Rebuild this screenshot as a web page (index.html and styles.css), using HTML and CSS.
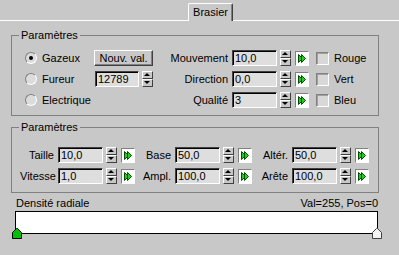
FILE: index.html
```html
<!DOCTYPE html>
<html lang="fr">

<head>
    <meta charset="UTF-8">
    <title>Brasier</title>
    <link rel="stylesheet" href="styles.css">
</head>

<body>
    <svg width="0" height="0" class="defs">
        <symbol id="key" viewBox="0 0 12 13">
            <polygon points="2.5,2.5 6.5,6.5 2.5,10.5" fill="#22cc22" stroke="#005000" />
            <polygon points="5.5,2.5 9.5,6.5 5.5,10.5" fill="#22cc22" stroke="#005000" />
        </symbol>
    </svg>

    <div class="tabbar">
        <div class="tab">Brasier</div>
    </div>

    <fieldset class="group">
        <legend>Paramètres</legend>
        <div class="rows rows-top">
            <div class="row">
                <span class="opt"><span class="radio on"></span>Gazeux</span>
                <span class="mid"><button class="btn">Nouv. val.</button></span>
                <span class="lbl w79">Mouvement</span>
                <span class="field">10,0</span>
                <span class="spin"><i></i><i></i></span>
                <span class="key"><svg width="12" height="13"><use href="#key" /></svg></span>
                <span class="check"></span><span class="clabel">Rouge</span>
            </div>
            <div class="row">
                <span class="opt"><span class="radio"></span>Fureur</span>
                <span class="mid"><span class="field small">12789</span><span class="spin"><i></i><i></i></span></span>
                <span class="lbl w79">Direction</span>
                <span class="field">0,0</span>
                <span class="spin"><i></i><i></i></span>
                <span class="key"><svg width="12" height="13"><use href="#key" /></svg></span>
                <span class="check"></span><span class="clabel">Vert</span>
            </div>
            <div class="row">
                <span class="opt"><span class="radio"></span>Electrique</span>
                <span class="mid"></span>
                <span class="lbl w79">Qualité</span>
                <span class="field">3</span>
                <span class="spin"><i></i><i></i></span>
                <span class="key"><svg width="12" height="13"><use href="#key" /></svg></span>
                <span class="check"></span><span class="clabel">Bleu</span>
            </div>
        </div>
    </fieldset>

    <fieldset class="group group-low">
        <legend>Paramètres</legend>
        <div class="rows rows-low">
            <div class="row">
                <span class="lbl w38">Taille</span>
                <span class="field">10,0</span>
                <span class="spin"><i></i><i></i></span>
                <span class="key"><svg width="12" height="13"><use href="#key" /></svg></span>
                <span class="lbl w40">Base</span>
                <span class="field">50,0</span>
                <span class="spin"><i></i><i></i></span>
                <span class="key"><svg width="12" height="13"><use href="#key" /></svg></span>
                <span class="lbl w40">Altér.</span>
                <span class="field">50,0</span>
                <span class="spin"><i></i><i></i></span>
                <span class="key"><svg width="12" height="13"><use href="#key" /></svg></span>
            </div>
            <div class="row">
                <span class="lbl w38">Vitesse</span>
                <span class="field">1,0</span>
                <span class="spin"><i></i><i></i></span>
                <span class="key"><svg width="12" height="13"><use href="#key" /></svg></span>
                <span class="lbl w40">Ampl.</span>
                <span class="field">100,0</span>
                <span class="spin"><i></i><i></i></span>
                <span class="key"><svg width="12" height="13"><use href="#key" /></svg></span>
                <span class="lbl w40">Arête</span>
                <span class="field">100,0</span>
                <span class="spin"><i></i><i></i></span>
                <span class="key"><svg width="12" height="13"><use href="#key" /></svg></span>
            </div>
        </div>
    </fieldset>

    <div class="density">
        <span>Densité radiale</span>
        <span>Val=255, Pos=0</span>
    </div>
    <div class="ramp">
        <svg class="flag flag-left" width="10" height="11" viewBox="0 0 10 11">
            <path d="M0.5,10.5 V4.5 L4.5,0.5 H5.5 L9.5,4.5 V10.5 Z" fill="#00c000" stroke="#000" />
        </svg>
        <svg class="flag flag-right" width="10" height="11" viewBox="0 0 10 11">
            <path d="M0.5,10.5 V4.5 L4.5,0.5 H5.5 L9.5,4.5 V10.5 Z" fill="#f4f4f4" stroke="#404040" />
        </svg>
    </div>
</body>

</html>
```

FILE: styles.css
```css
body {
    margin: 0;
    width: 399px;
    height: 255px;
    overflow: hidden;
    background-color: #c8c8c8;
    font-family: 'Liberation Sans', Arial, sans-serif;
    font-size: 11px;
    line-height: 13px;
    color: #000;
}

.defs {
    position: absolute;
}

/* tab strip */
.tabbar {
    height: 20px;
    border-bottom: 1px solid #fff;
    display: flex;
    align-items: flex-end;
    padding-left: 188px;
}

.tab {
    width: 43px;
    height: 17px;
    margin-bottom: -1px;
    background-color: #c8c8c8;
    border: 1px solid;
    border-color: #fff #404040 transparent #fff;
    border-bottom: 0;
    border-radius: 2px 2px 0 0;
    box-shadow: inset -1px 0 #808080;
    text-align: center;
    line-height: 17px;
}

/* group boxes */
.group {
    margin: 8px 20px 0 11px;
    padding: 0;
    border: 1px solid #808080;
    min-width: 0;
}

.group legend {
    margin-left: 7px;
    padding: 0 2px;
    line-height: 13px;
}

.group-low {
    margin-top: 5px;
}

.rows {
    display: flex;
    flex-direction: column;
    gap: 5px;
}

.rows-top {
    padding: 8px 0 7px 13px;
}

.rows-low {
    padding: 13px 0 8px 8px;
}

.row {
    display: flex;
    align-items: center;
    height: 16px;
}

.opt {
    width: 69px;
    display: flex;
    align-items: center;
}

.mid {
    width: 59px;
    display: flex;
    align-items: center;
}

.lbl {
    text-align: right;
    padding-right: 4px;
    box-sizing: border-box;
}

.w79 { width: 79px; }
.w40 { width: 40px; }
.w38 { width: 38px; }

/* controls */
.radio {
    width: 12px;
    height: 12px;
    box-sizing: border-box;
    margin-right: 5px;
    border-radius: 50%;
    border: 1px solid;
    border-color: #808080 #fff #fff #808080;
    background-color: #dcdcdc;
    display: flex;
    align-items: center;
    justify-content: center;
}

.radio.on::after {
    content: "";
    width: 4px;
    height: 4px;
    border-radius: 50%;
    background-color: #000;
}

.btn {
    width: 59px;
    height: 16px;
    padding: 0;
    font: inherit;
    line-height: 12px;
    background-color: #c8c8c8;
    border: 1px solid;
    border-color: #fff #404040 #404040 #fff;
    box-shadow: inset -1px -1px #808080;
}

.field {
    width: 45px;
    height: 16px;
    box-sizing: border-box;
    padding-left: 2px;
    background-color: #dedede;
    border: 1px solid;
    border-color: #404040 #fff #fff #404040;
    box-shadow: inset 1px 1px #000;
    line-height: 14px;
}

.field.small {
    width: 44px;
    margin-left: 1px;
}

.spin {
    width: 11px;
    height: 16px;
    margin-left: 3px;
    display: flex;
    flex-direction: column;
}

.spin i {
    flex: 1;
    box-sizing: border-box;
    border: 1px solid;
    border-color: #fff #404040 #404040 #fff;
    position: relative;
}

.spin i::after {
    content: "";
    position: absolute;
    left: 1px;
    top: 1px;
    border-left: 3px solid transparent;
    border-right: 3px solid transparent;
}

.spin i:first-child::after {
    border-bottom: 3px solid #000;
}

.spin i:last-child::after {
    border-top: 3px solid #000;
}

.key {
    width: 14px;
    height: 15px;
    margin-left: 4px;
    box-sizing: border-box;
    border: 1px solid;
    border-color: #808080 #fff #fff #808080;
    background-color: #fff;
    display: flex;
    align-items: center;
    justify-content: center;
}

.check {
    width: 13px;
    height: 13px;
    margin-left: 7px;
    box-sizing: border-box;
    border: 1px solid;
    border-color: #808080 #fff #fff #808080;
    box-shadow: inset 1px 1px #a0a0a0;
    background-color: #d8d8d8;
}

.clabel {
    margin-left: 5px;
}

/* density ramp */
.density {
    display: flex;
    justify-content: space-between;
    padding: 4px 21px 0 16px;
}

.ramp {
    position: relative;
    width: 363px;
    height: 23px;
    box-sizing: border-box;
    margin: 1px 0 0 15px;
    background-color: #fff;
    border: 1px solid #000;
}

.flag {
    position: absolute;
    top: 16px;
}

.flag-left {
    left: -4px;
}

.flag-right {
    left: 356px;
}
```
